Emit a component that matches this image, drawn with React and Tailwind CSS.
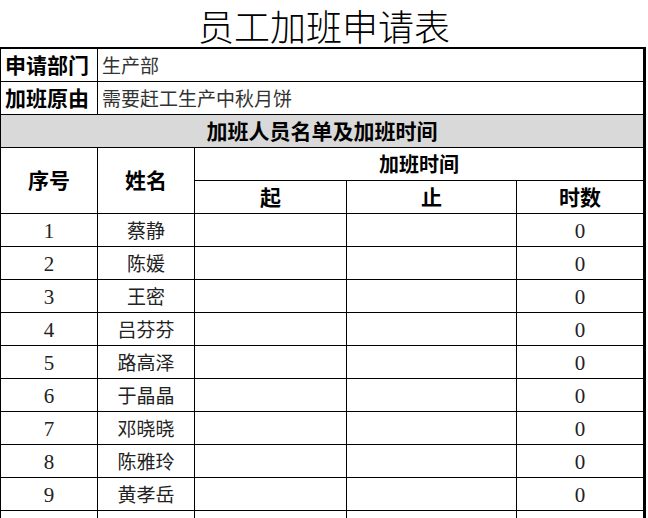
import React from "react";

const people = ["蔡静", "陈媛", "王密", "吕芬芬", "路高泽", "于晶晶", "邓晓晓", "陈雅玲", "黄孝岳", ""];

function App() {
  return (
    <div
      className="w-[648px] h-[518px] overflow-hidden bg-white text-black"
      style={{ fontFamily: '"Liberation Serif", "Noto Sans CJK SC", serif' }}
    >
      <div className="h-[47px] flex items-center justify-center pt-[10px] text-[36px] font-light leading-none">
        员工加班申请表
      </div>
      <table className="w-[646px] table-fixed border-collapse border-t-2 border-r-[3px] border-l border-black [&_td]:pt-[3px]">
        <colgroup>
          <col className="w-[97px]" />
          <col className="w-[97px]" />
          <col className="w-[152px]" />
          <col className="w-[170px]" />
          <col />
        </colgroup>
        <tbody>
          <tr className="h-[33px]">
            <td className="border border-black px-1 text-[21px] font-bold leading-none">申请部门</td>
            <td colSpan={4} className="border border-black px-1 text-[19px] text-[#333] leading-none">生产部</td>
          </tr>
          <tr className="h-[33px]">
            <td className="border border-black px-1 text-[21px] font-bold leading-none">加班原由</td>
            <td colSpan={4} className="border border-black px-1 text-[19px] text-[#333] leading-none">需要赶工生产中秋月饼</td>
          </tr>
          <tr className="h-[33px] bg-[#d9d9d9]">
            <td colSpan={5} className="border border-black text-center text-[21px] font-bold leading-none">
              加班人员名单及加班时间
            </td>
          </tr>
          <tr className="h-[33px]">
            <td rowSpan={2} className="border border-black text-center text-[21px] font-bold leading-none">序号</td>
            <td rowSpan={2} className="border border-black text-center text-[21px] font-bold leading-none">姓名</td>
            <td colSpan={3} className="border border-black text-center text-[20px] font-bold leading-none">加班时间</td>
          </tr>
          <tr className="h-[33px]">
            <td className="border border-black text-center text-[21px] font-bold leading-none">起</td>
            <td className="border border-black text-center text-[21px] font-bold leading-none">止</td>
            <td className="border border-black text-center text-[21px] font-bold leading-none">时数</td>
          </tr>
          {people.map((name, i) => (
            <tr key={i} className="h-[33px] text-[19px] text-[#222] leading-none">
              <td className="border border-black text-center text-[21px]">{name ? i + 1 : ""}</td>
              <td className="border border-black text-center">{name}</td>
              <td className="border border-black"></td>
              <td className="border border-black"></td>
              <td className="border border-black text-center text-[21px]">{name ? 0 : ""}</td>
            </tr>
          ))}
        </tbody>
      </table>
    </div>
  );
}

export default App;
